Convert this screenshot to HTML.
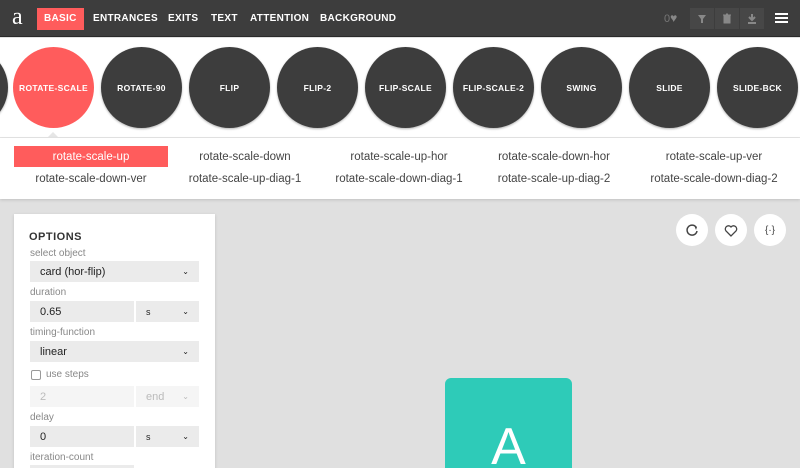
<!DOCTYPE html>
<html><head><meta charset="utf-8"><style>
*{box-sizing:border-box;margin:0;padding:0}
html,body{width:800px;height:468px;overflow:hidden}
body{background:#e0e0e0;font-family:"Liberation Sans",sans-serif;position:relative}
.top{position:absolute;left:0;top:0;width:800px;height:37px;background:#3d3d3d;border-bottom:1px solid #2a2a2a}
.logo{position:absolute;left:12px;top:4px;color:#fff;font-family:"Liberation Serif",serif;font-size:24px}
.nav{position:absolute;top:8px;height:22px;line-height:22px;color:#fff;font-size:10px;font-weight:bold;letter-spacing:.3px}
.nav.on{background:#ff5c5c;padding:0 7px}
.tb{position:absolute;top:8px;width:24px;height:21px;background:#474747}
.strip{position:absolute;left:0;top:38px;width:800px;height:100px;background:#fff;border-bottom:1px solid #e6e6e6;overflow:hidden}
.c{position:absolute;top:9px;width:81px;height:81px;border-radius:50%;background:#3d3d3d;color:#fff;font-size:8.5px;font-weight:bold;letter-spacing:.3px;display:flex;align-items:center;justify-content:center;box-shadow:0 1px 2px rgba(0,0,0,.3);white-space:nowrap}
.c.on{background:#ff5c5c;box-shadow:none}
.tri{position:absolute;left:47px;top:132px;width:0;height:0;border-left:6px solid transparent;border-right:6px solid transparent;border-bottom:6px solid #e6e6e6}
.list{position:absolute;left:0;top:138px;width:800px;height:61px;background:#fff;box-shadow:0 1px 3px rgba(0,0,0,.15)}
.it{position:absolute;width:154px;text-align:center;font-size:11.5px;color:#444;height:21px;line-height:21px}
.it.on{background:#ff5c5c;color:#fff}
.panel{position:absolute;left:14px;top:214px;width:201px;height:260px;background:#fff;box-shadow:0 1px 3px rgba(0,0,0,.15);overflow:hidden}
.lbl{position:absolute;left:16px;font-size:10px;color:#888}
.fld{position:absolute;height:21px;background:#ebebeb;font-size:11px;color:#222;line-height:22px;padding-left:10px}
.ar{position:absolute;right:10px;top:0;font-size:8px}
.rb{position:absolute;top:214px;width:32px;height:32px;border-radius:50%;background:#fff;display:flex;align-items:center;justify-content:center;color:#444;font-size:10px}
.card{position:absolute;left:445px;top:378px;width:127px;height:100px;background:#2ecbb8;border-radius:6px;color:#fff;font-size:52px;text-align:center;line-height:1;padding-top:43px;font-weight:300}
</style></head><body>
<div class="top">
<div class="logo">a</div>
<div class="nav on" style="left:37px">BASIC</div>
<div class="nav" style="left:93px">ENTRANCES</div>
<div class="nav" style="left:168px">EXITS</div>
<div class="nav" style="left:211px">TEXT</div>
<div class="nav" style="left:250px">ATTENTION</div>
<div class="nav" style="left:320px">BACKGROUND</div>
<div style="position:absolute;left:664px;top:11px;color:#777;font-size:11px">0<span style="color:#888;font-size:12px">&#9829;</span></div>
<div class="tb" style="left:690px"><svg width="24" height="21"><path d="M8 7h8l-3 4v4h-2v-4z" fill="#888"/></svg></div>
<div class="tb" style="left:715px"><svg width="24" height="21"><path d="M9 8h6v7h-6zM8 7h8M11 6h2" stroke="#888" fill="#888"/></svg></div>
<div class="tb" style="left:740px"><svg width="24" height="21"><path d="M12 6v6M9 9l3 3 3-3M8 15h8" stroke="#888" stroke-width="2" fill="none"/></svg></div>
<svg style="position:absolute;left:775px;top:12px" width="13" height="12"><path d="M0 2h13M0 6h13M0 10h13" stroke="#fff" stroke-width="2"/></svg>
</div>
<div class="strip">
<div class="c" style="left:-73px"></div>
<div class="c on" style="left:13px">ROTATE-SCALE</div>
<div class="c" style="left:101px">ROTATE-90</div>
<div class="c" style="left:189px">FLIP</div>
<div class="c" style="left:277px">FLIP-2</div>
<div class="c" style="left:365px">FLIP-SCALE</div>
<div class="c" style="left:453px">FLIP-SCALE-2</div>
<div class="c" style="left:541px">SWING</div>
<div class="c" style="left:629px">SLIDE</div>
<div class="c" style="left:717px">SLIDE-BCK</div>
</div>
<div class="tri"></div>
<div class="list">
<div class="it on" style="left:14px;top:8px;line-height:23px">rotate-scale-up</div>
<div class="it" style="left:168px;top:9px">rotate-scale-down</div>
<div class="it" style="left:322px;top:9px">rotate-scale-up-hor</div>
<div class="it" style="left:477px;top:9px">rotate-scale-down-hor</div>
<div class="it" style="left:637px;top:9px">rotate-scale-up-ver</div>
<div class="it" style="left:14px;top:31px">rotate-scale-down-ver</div>
<div class="it" style="left:168px;top:31px">rotate-scale-up-diag-1</div>
<div class="it" style="left:322px;top:31px">rotate-scale-down-diag-1</div>
<div class="it" style="left:477px;top:31px">rotate-scale-up-diag-2</div>
<div class="it" style="left:637px;top:31px">rotate-scale-down-diag-2</div>
</div>
<div class="panel">
<div style="position:absolute;left:15px;top:17px;font-size:11px;font-weight:bold;color:#333;letter-spacing:.5px">OPTIONS</div>
<div class="lbl" style="top:34px">select object</div>
<div class="fld" style="left:16px;top:47px;width:169px">card (hor-flip)<span class="ar">&#8964;</span></div>
<div class="lbl" style="top:73px">duration</div>
<div class="fld" style="left:16px;top:87px;width:104px">0.65</div>
<div class="fld" style="left:122px;top:87px;width:63px;font-size:9px">s<span class="ar">&#8964;</span></div>
<div class="lbl" style="top:113px">timing-function</div>
<div class="fld" style="left:16px;top:127px;width:169px">linear<span class="ar">&#8964;</span></div>
<div style="position:absolute;left:17px;top:156px;width:10px;height:10px;border:1px solid #999;border-radius:2px"></div>
<div class="lbl" style="top:155px;left:32px">use steps</div>
<div class="fld" style="left:16px;top:172px;width:104px;background:#f5f5f5;color:#bbb">2</div>
<div class="fld" style="left:122px;top:172px;width:63px;background:#f5f5f5;color:#bbb">end<span class="ar">&#8964;</span></div>
<div class="lbl" style="top:198px">delay</div>
<div class="fld" style="left:16px;top:212px;width:104px">0</div>
<div class="fld" style="left:122px;top:212px;width:63px;font-size:9px">s<span class="ar">&#8964;</span></div>
<div class="lbl" style="top:238px">iteration-count</div>
<div class="fld" style="left:16px;top:251px;width:104px"></div>
</div>
<div class="rb" style="left:676px"><svg width="14" height="14"><path d="M11 4A5 5 0 1 0 12 8" stroke="#444" stroke-width="1.5" fill="none"/><path d="M9 2l3 2-1 3z" fill="#444"/></svg></div>
<div class="rb" style="left:715px"><svg width="14" height="13"><path d="M7 12L2 7A3 3 0 0 1 7 3A3 3 0 0 1 12 7z" stroke="#444" stroke-width="1.3" fill="none"/></svg></div>
<div class="rb" style="left:754px">{·}</div>
<div class="card">A</div>
</body></html>
